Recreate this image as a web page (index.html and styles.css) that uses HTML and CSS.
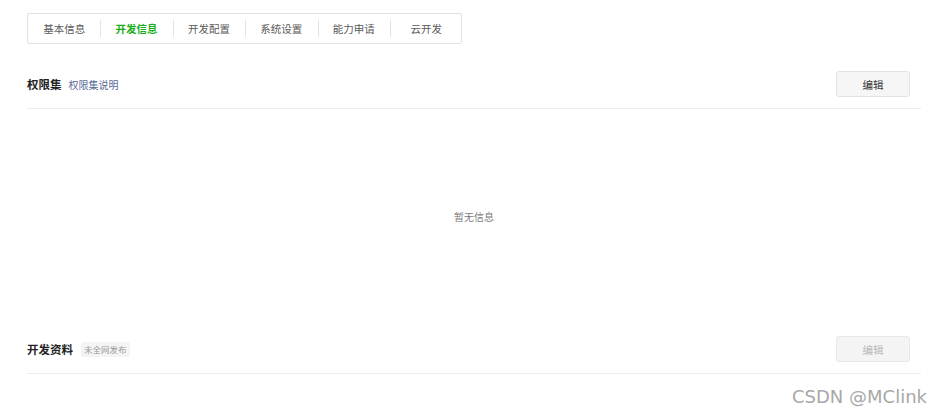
FILE: index.html
```html
<!DOCTYPE html>
<html lang="zh-CN">
<head>
<meta charset="utf-8">
<title>开发信息</title>
<link rel="stylesheet" href="styles.css">
</head>
<body>
<div class="page">
  <nav class="tabs">
    <a class="tab">基本信息</a>
    <a class="tab active">开发信息</a>
    <a class="tab">开发配置</a>
    <a class="tab">系统设置</a>
    <a class="tab">能力申请</a>
    <a class="tab">云开发</a>
  </nav>

  <section class="section">
    <div class="section-head">
      <div class="title-group">
        <h3 class="title">权限集</h3>
        <a class="link">权限集说明</a>
      </div>
      <button class="btn">编辑</button>
    </div>
    <div class="empty">暂无信息</div>
  </section>

  <section class="section">
    <div class="section-head">
      <div class="title-group">
        <h3 class="title">开发资料</h3>
        <span class="badge">未全网发布</span>
      </div>
      <button class="btn disabled" disabled>编辑</button>
    </div>
  </section>
</div>
<div class="watermark">CSDN @MClink</div>
</body>
</html>
```

FILE: styles.css
```css
html, body {
  margin: 0;
  padding: 0;
  background: #ffffff;
}

body {
  font-family: "Noto Sans CJK SC", "Noto Sans", sans-serif;
  color: #353535;
  width: 942px;
  height: 420px;
  overflow: hidden;
  position: relative;
}

.page {
  padding: 13px 21px 0 27px;
}

.tabs {
  display: flex;
  width: 433px;
  height: 29px;
  border: 1px solid #e1e1e1;
  border-radius: 2px;
  align-items: center;
}

.tab {
  flex: 0 0 72.4px;
  text-align: center;
  font-size: 10.5px;
  line-height: 17px;
  color: #5a5a5a;
  position: relative;
}

.tab + .tab::before {
  content: "";
  position: absolute;
  left: 0;
  top: 0;
  width: 1px;
  height: 17px;
  background: #e4e4e4;
}

.tab.active {
  color: #1aad19;
  font-weight: 600;
}

.section-head {
  display: flex;
  align-items: center;
  justify-content: space-between;
  margin-top: 27px;
  padding-bottom: 11px;
  border-bottom: 1px solid #ececec;
  padding-right: 11px;
}

.title-group {
  display: flex;
  align-items: center;
  gap: 7px;
}

.title {
  margin: 0;
  font-size: 11.5px;
  font-weight: 700;
  color: #222;
}

.link {
  font-size: 10px;
  color: #576b95;
}

.badge {
  font-size: 8.5px;
  line-height: 15px;
  padding: 0 3px;
  margin-left: 1px;
  background: #f4f4f4;
  color: #9a9a9a;
  border-radius: 2px;
}

.btn {
  width: 74px;
  height: 26px;
  border: 1px solid #e3e3e3;
  border-radius: 3px;
  background: #f6f6f6;
  color: #353535;
  font-family: "Noto Sans CJK SC", sans-serif;
  font-size: 10.5px;
  padding: 0;
}

.btn.disabled {
  color: #b8b8b8;
  background: #f4f4f4;
  border-color: #e8e8e8;
}

.empty {
  height: 227px;
  box-sizing: border-box;
  padding-top: 101px;
  text-align: center;
  font-size: 10px;
  line-height: 14px;
  color: #7a7a7a;
}

.section + .section .section-head {
  margin-top: 0;
}

.watermark {
  position: absolute;
  right: 15px;
  top: 386px;
  font-family: "DejaVu Sans", sans-serif;
  font-size: 18px;
  color: #a8a8a8;
}
```
